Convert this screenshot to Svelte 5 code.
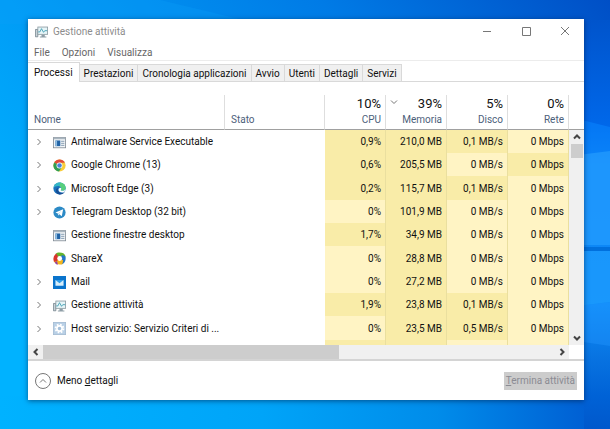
<script lang="ts">
	type Level = 0 | 1

	interface Process {
		name: string
		icon: string
		expandable: boolean
		values: [string, Level][]
	}

	const menus = ['File', 'Opzioni', 'Visualizza']
	const tabs = [
		'Processi',
		'Prestazioni',
		'Cronologia applicazioni',
		'Avvio',
		'Utenti',
		'Dettagli',
		'Servizi'
	]

	const columns = [
		{ label: 'CPU', total: '10%', sorted: false },
		{ label: 'Memoria', total: '39%', sorted: true },
		{ label: 'Disco', total: '5%', sorted: false },
		{ label: 'Rete', total: '0%', sorted: false }
	]

	// level 1 is the darker heat map shade
	const processes: Process[] = [
		{ name: 'Antimalware Service Executable', icon: 'app', expandable: true, values: [['0,9%', 1], ['210,0 MB', 1], ['0,1 MB/s', 1], ['0 Mbps', 0]] },
		{ name: 'Google Chrome (13)', icon: 'chrome', expandable: true, values: [['0,6%', 1], ['205,5 MB', 1], ['0 MB/s', 0], ['0 Mbps', 1]] },
		{ name: 'Microsoft Edge (3)', icon: 'edge', expandable: true, values: [['0,2%', 1], ['115,7 MB', 1], ['0,1 MB/s', 1], ['0 Mbps', 0]] },
		{ name: 'Telegram Desktop (32 bit)', icon: 'telegram', expandable: true, values: [['0%', 0], ['101,9 MB', 1], ['0 MB/s', 0], ['0 Mbps', 0]] },
		{ name: 'Gestione finestre desktop', icon: 'app', expandable: false, values: [['1,7%', 1], ['34,9 MB', 1], ['0 MB/s', 0], ['0 Mbps', 0]] },
		{ name: 'ShareX', icon: 'sharex', expandable: false, values: [['0%', 0], ['28,8 MB', 1], ['0 MB/s', 0], ['0 Mbps', 0]] },
		{ name: 'Mail', icon: 'mail', expandable: true, values: [['0%', 0], ['27,2 MB', 1], ['0 MB/s', 0], ['0 Mbps', 0]] },
		{ name: 'Gestione attività', icon: 'taskmgr', expandable: true, values: [['1,9%', 1], ['23,8 MB', 1], ['0,1 MB/s', 1], ['0 Mbps', 0]] },
		{ name: 'Host servizio: Servizio Criteri di ...', icon: 'gear', expandable: true, values: [['0%', 0], ['23,5 MB', 1], ['0,5 MB/s', 1], ['0 Mbps', 0]] }
	]

	let activeTab = $state('Processi')
</script>

{#snippet icon(name: string)}
	<svg class="icon" viewBox="0 0 16 16" aria-hidden="true">
		{#if name === 'app'}
			<rect x="0.5" y="2" width="15" height="12.5" fill="#f4f6f8" stroke="#7f8a94" />
			<rect x="1" y="2" width="14" height="2" fill="#a9b6c0" />
			<rect x="3" y="5.5" width="6" height="7" fill="#2364a6" />
			<rect x="3" y="5.5" width="2" height="7" fill="#8fbde2" />
			<path d="M10 6.5h4M10 9h4M10 11.5h4" stroke="#6a87a0" />
		{:else if name === 'chrome'}
			<circle cx="8" cy="8" r="7.5" fill="#f9cd3a" />
			<path d="M8 8 1.5 4.25A7.5 7.5 0 0 1 14.6 4.5H8z" fill="#df4b3b" />
			<path d="M1.5 4.25A7.5 7.5 0 0 0 7.4 15.5L11 9.75 8 8z" fill="#2f9e54" />
			<circle cx="8" cy="8" r="3.6" fill="#fff" />
			<circle cx="8" cy="8" r="2.8" fill="#4a82dc" />
		{:else if name === 'edge'}
			<circle cx="8" cy="8" r="7.5" fill="#1b72bd" />
			<path d="M.6 7.3C1.2 3 4.5.5 8 .5c4.5 0 7.5 3.2 7.5 6.6 0 2.5-1.8 3.7-4 3.7-1.5 0-2.2-.6-1.7-1.4C11 7 9 5 6.5 5 3.800 5 1.500 6 .6 7.300z" fill="#36b8c5" />
			<path d="M9 .6c4 .5 6.5 3.3 6.5 6.5 0 2.5-1.8 3.7-4 3.7-1.5 0-2.200-.6-1.700-1.400C11 7 9.500 5.500 8 5.100z" fill="#58cf7c" />
			<path d="M6.3 7c-1.3 3 .8 6.5 4.6 6.5 1.4 0 2.7-.4 3.6-1.1-2 3.5-7.500 4-10 1.200C2.500 11.300 3.600 8 6.300 7z" fill="#174f96" />
			<path d="M9.7 9.4c-.5.8.2 1.4 1.8 1.4 1.5 0 2.900-.6 3.600-1.600-.2 1.700-.8 2.700-1.500 3.500C9.500 14 6.500 11.500 6.800 9.200c.2-1.500 1.400-2.200 2.400-2.200 1.200.3 1.100 1.600.5 2.400z" fill="#fff" />
		{:else if name === 'telegram'}
			<circle cx="8" cy="8" r="7.5" fill="#2c8ac6" />
			<path d="m3 8 9.5-4-1.7 8.5-3-2.2-1.5 1.5-.3-2.7z" fill="#fff" />
			<path d="m6 9.1 4.5-3.3-3.5 4-.7 2z" fill="#b6d9ed" />
		{:else if name === 'sharex'}
			<path d="M8 .5C12 .5 15 2 15.5 6L8 8 3 2.5C4.5 1 6 .5 8 .5z" fill="#64b32e" />
			<path d="M15.5 6c.5 4-1 8-5 9.2L8 8l3-4c2 0 3.8.8 4.5 2z" fill="#2376c8" />
			<path d="M11.5 15C7 16.5 2.5 14.5 1 11.5L8 8l4.500 2z" fill="#f4b51c" />
			<path d="M1.2 12C-.3 8.5.6 4.5 4 1.8L8 8l-3.5 3.5z" fill="#d9352e" />
			<path d="M2 13c1.5 2 2.5 2.5 4 2.7L5 11z" fill="#9444a4" />
			<circle cx="8.2" cy="8" r="3" fill="#fff" />
		{:else if name === 'mail'}
			<rect width="16" height="16" fill="#0a74cc" />
			<path d="M3 5h10v7H3z" fill="#d7eefb" />
			<path d="M3 5h10L8 8.8z" fill="#2e9ce8" />
		{:else if name === 'taskmgr'}
			<path d="M.5 5.5h3v9h-3z" fill="#c8d2d8" stroke="#75848d" />
			<rect x="3.5" y="2.5" width="12" height="9" fill="#e6f5f8" stroke="#8a999f" />
			<path d="M4 8.5h2l2-4 2.5 4.5L12 7h3" fill="none" stroke="#3497ad" />
			<path d="M8 12h4v2h2v1.5H6V14h2z" fill="#8d9da6" />
		{:else if name === 'gear'}
			<rect x="0.5" y="0.5" width="15" height="15" fill="#b9d0e6" stroke="#a3bbd2" />
			<circle cx="8" cy="8" r="4.8" fill="none" stroke="#fff" stroke-width="2.4" stroke-dasharray="2 1.77" />
			<circle cx="8" cy="8" r="3.2" fill="#a3bfda" stroke="#fff" stroke-width="2" />
		{/if}
	</svg>
{/snippet}

{#snippet chevron(direction: string)}
	<svg class="chevron {direction}" viewBox="0 0 8 8" aria-hidden="true">
		<path d="M2.5 1 5.5 4 2.5 7" />
	</svg>
{/snippet}

<div class="desktop">
	<svg class="wallpaper" viewBox="0 0 610 429" preserveAspectRatio="none" aria-hidden="true">
		<defs>
			<linearGradient id="sky" x1="0" y1="0.6" x2="1" y2="0">
				<stop offset="0" stop-color="#00b2ff" />
				<stop offset="0.3" stop-color="#009af5" />
				<stop offset="0.65" stop-color="#007be6" />
				<stop offset="1" stop-color="#004fc6" />
			</linearGradient>
			<linearGradient id="side" x1="0" y1="0" x2="0" y2="1">
				<stop offset="0" stop-color="#0054cc" />
				<stop offset="0.26" stop-color="#0068ea" />
				<stop offset="0.36" stop-color="#0c82f4" />
				<stop offset="0.7" stop-color="#0e8cf8" />
				<stop offset="0.82" stop-color="#0874e2" />
				<stop offset="0.92" stop-color="#0062d6" />
				<stop offset="1" stop-color="#0058cc" />
			</linearGradient>
			<linearGradient id="floor" x1="0" y1="0" x2="1" y2="0">
				<stop offset="0" stop-color="#00b2ff" />
				<stop offset="0.45" stop-color="#00a4f8" />
				<stop offset="0.75" stop-color="#008cea" />
				<stop offset="1" stop-color="#0060d4" />
			</linearGradient>
		</defs>
		<rect width="610" height="429" fill="url(#sky)" />
		<path d="M160 0 260 24H0V0z" fill="#0aa0f8" opacity="0.3" />
		<rect x="580" y="20" width="30" height="409" fill="url(#side)" />
		<path d="M570 117 610 127V245H570z" fill="#0a88ff" opacity="0.5" />
		<path d="M570 156 610 151V245H570z" fill="#2aa2ff" opacity="0.6" />
		<path d="M570 251h40v51l-40 5z" fill="#22a0ff" opacity="0.6" />
		<path d="M570 247h40v4h-40z" fill="#0070dd" />
		<path d="M570 307 610 302V346L570 340z" fill="#2496ff" opacity="0.4" />
		<rect y="396" width="584" height="33" fill="url(#floor)" />
	</svg>

	<main class="window">
		<header class="titlebar">
			{@render icon('taskmgr')}
			<h1>Gestione attività</h1>
			<div class="controls">
				<button aria-label="Riduci a icona">
					<svg viewBox="0 0 10 10"><path d="M1 5.5h8" /></svg>
				</button>
				<button aria-label="Ingrandisci">
					<svg viewBox="0 0 10 10"><path d="M1.5 1.5h8v8h-8z" /></svg>
				</button>
				<button aria-label="Chiudi">
					<svg viewBox="0 0 10 10"><path d="m1 1 8 8M9 1 1 9" /></svg>
				</button>
			</div>
		</header>

		<nav class="menubar">
			{#each menus as menu}
				<button>{menu}</button>
			{/each}
		</nav>

		<div class="tabs" role="tablist">
			{#each tabs as tab}
				<button
					role="tab"
					aria-selected={tab === activeTab}
					class:active={tab === activeTab}
					onclick={() => (activeTab = tab)}
				>
					{tab}
				</button>
			{/each}
		</div>

		<div class="content">
			<div class="viewport">
				<table>
					<colgroup>
						<col />
						<col class="status-col" />
						{#each columns as column (column.label)}
							<col class="value-col" />
						{/each}
					</colgroup>
					<thead>
						<tr>
							<th class="text">Nome</th>
							<th class="text">Stato</th>
							{#each columns as column (column.label)}
								<th aria-sort={column.sorted ? 'descending' : undefined}>
									<div class="total">
										{#if column.sorted}
											{@render chevron('down')}
										{/if}
										<span>{column.total}</span>
									</div>
									{column.label}
								</th>
							{/each}
						</tr>
					</thead>
					<tbody>
						{#each processes as process (process.name)}
							<tr>
								<td>
									<div class="name-cell">
										{#if process.expandable}
											<button class="expand" aria-label="Espandi {process.name}">
												{@render chevron('right')}
											</button>
										{:else}
											<span class="expand"></span>
										{/if}
										{@render icon(process.icon)}
										<span>{process.name}</span>
									</div>
								</td>
								<td></td>
								{#each process.values as [value, level]}
									<td class="value" class:high={level === 1}>{value}</td>
								{/each}
							</tr>
						{/each}
						<tr aria-hidden="true">
							<td></td>
							<td></td>
							<td class="value high"></td>
							<td class="value high"></td>
							<td class="value"></td>
							<td class="value"></td>
						</tr>
					</tbody>
				</table>
			</div>
			<div class="scroll-y">
				<div class="track">
					<button aria-label="Scorri su">{@render chevron('up')}</button>
					<div class="thumb"></div>
					<button aria-label="Scorri giù">{@render chevron('down')}</button>
				</div>
			</div>
			<div class="scroll-x">
				<button aria-label="Scorri a sinistra">{@render chevron('left')}</button>
				<div class="rail"><div class="thumb"></div></div>
				<button aria-label="Scorri a destra">{@render chevron('right')}</button>
			</div>
		</div>

		<footer>
			<button class="details">
				<span class="ring">{@render chevron('up')}</span>
				<span>Meno <u>d</u>ettagli</span>
			</button>
			<button class="end-task" disabled><u>T</u>ermina attività</button>
		</footer>
	</main>
</div>

<style>
	:global(body) {
		margin: 0;
	}

	.desktop {
		position: relative;
		box-sizing: border-box;
		min-height: 100vh;
		padding: 19px 26px 28px 28px;
		background: #00a2f8;
		font-family: Roboto, 'Open Sans', sans-serif;
		font-size: 10px;
		line-height: 14px;
		color: #111;
		overflow: hidden;
	}

	.wallpaper {
		position: absolute;
		inset: 0;
		width: 100%;
		height: 100%;
	}

	.window {
		position: relative;
		background: #fff;
		box-shadow: 0 1px 5px rgba(0, 30, 70, 0.6);
	}

	button {
		padding: 0;
		border: 0;
		background: none;
		font: inherit;
		color: inherit;
	}

	.icon {
		flex: none;
		width: 13px;
		height: 13px;
	}

	.chevron {
		display: block;
		flex: none;
		width: 8px;
		height: 8px;
		fill: none;
		stroke: currentColor;
	}

	.chevron.down {
		transform: rotate(90deg);
	}

	.chevron.left {
		transform: rotate(180deg);
	}

	.chevron.up {
		transform: rotate(-90deg);
	}

	.titlebar {
		display: flex;
		align-items: center;
		gap: 5px;
		height: 24px;
		padding-left: 7px;
	}

	h1 {
		flex: 1;
		margin: 0;
		padding-top: 2px;
		font-size: 10px;
		font-weight: 400;
		color: #8c8c8c;
	}

	.controls {
		display: flex;
	}

	.controls button {
		display: grid;
		place-items: center;
		width: 39px;
		height: 24px;
	}

	.controls svg {
		width: 10px;
		height: 10px;
		fill: none;
		stroke: #777;
	}

	.menubar {
		display: flex;
		gap: 12px;
		height: 15px;
		padding: 2px 6px 0;
		border-bottom: 1px solid #ececec;
		color: #666;
	}

	.tabs {
		display: flex;
		align-items: flex-end;
		height: 20px;
		border-bottom: 1px solid #d9d9d9;
	}

	.tabs button {
		height: 17px;
		padding: 2px 4px 0;
		border: 1px solid #d9d9d9;
		border-width: 1px 1px 0 0;
		background: #f0f0f0;
	}

	.tabs button.active {
		height: 20px;
		margin-bottom: -1px;
		padding: 0 6px;
		background: #fff;
	}

	.content {
		display: grid;
		grid-template-columns: 1fr 15px;
		grid-template-rows: 250px 14px;
		padding-top: 13px;
		border-bottom: 2px solid #d4d4d4;
	}

	.viewport {
		overflow: hidden;
	}

	table {
		width: 100%;
		table-layout: fixed;
		border-collapse: separate;
		border-spacing: 0;
	}

	.status-col {
		width: 100px;
	}

	.value-col {
		width: 61px;
	}

	th {
		box-sizing: border-box;
		height: 35px;
		padding: 0 4px 2px;
		border-right: 1px solid #dedede;
		border-bottom: 1px solid #a0a0a0;
		font-weight: 400;
		text-align: right;
		vertical-align: bottom;
		color: #4c607a;
	}

	th.text {
		padding: 0 6px 2px;
		text-align: left;
	}

	.total {
		display: flex;
		align-items: center;
		justify-content: space-between;
		font-size: 13px;
		line-height: 18px;
		color: #111;
	}

	.total span {
		margin-left: auto;
	}

	.total .chevron {
		margin-bottom: 4px;
		color: #777;
	}

	td {
		box-sizing: border-box;
		height: 23px;
		padding: 1px 0 0;
	}

	tr:nth-child(3n) td {
		height: 24px;
	}

	.name-cell {
		display: flex;
		align-items: center;
		gap: 5px;
		padding-left: 7px;
		white-space: nowrap;
	}

	.expand {
		width: 8px;
		margin-right: 5px;
		color: #777;
	}

	.value {
		padding-right: 4px;
		border-right: 1px solid #eadf9f;
		background: #fff4c4;
		text-align: right;
		white-space: nowrap;
	}

	.value.high {
		background: #f9eca8;
	}

	.scroll-y {
		padding-top: 34px;
	}

	.track {
		display: flex;
		flex-direction: column;
		height: 215px;
		border-top: 1px solid #a0a0a0;
		background: #f0f0f0;
		color: #444;
	}

	.track .chevron,
	.scroll-x .chevron {
		stroke-width: 2;
	}

	.track button {
		display: grid;
		place-items: center;
		height: 14px;
	}

	.track button:last-child {
		margin-top: auto;
	}

	.track .thumb {
		height: 14px;
		margin: 0 1px 0 2px;
		background: #cdcdcd;
	}

	.scroll-x {
		display: flex;
		background: #f0f0f0;
		color: #444;
	}

	.scroll-x button {
		display: grid;
		place-items: center;
		width: 15px;
	}

	.rail {
		flex: 1;
	}

	.rail .thumb {
		width: 58%;
		height: 100%;
		background: #cdcdcd;
	}

	footer {
		display: flex;
		align-items: center;
		justify-content: space-between;
		height: 39px;
		padding: 0 7px;
	}

	.details {
		display: flex;
		align-items: center;
		gap: 6px;
	}

	.ring {
		display: grid;
		place-items: center;
		width: 14px;
		height: 14px;
		border: 1px solid #777;
		border-radius: 50%;
		color: #777;
	}

	.end-task {
		height: 18px;
		padding: 0 2px;
		background: #ccc;
		color: #8b8b93;
	}
</style>
